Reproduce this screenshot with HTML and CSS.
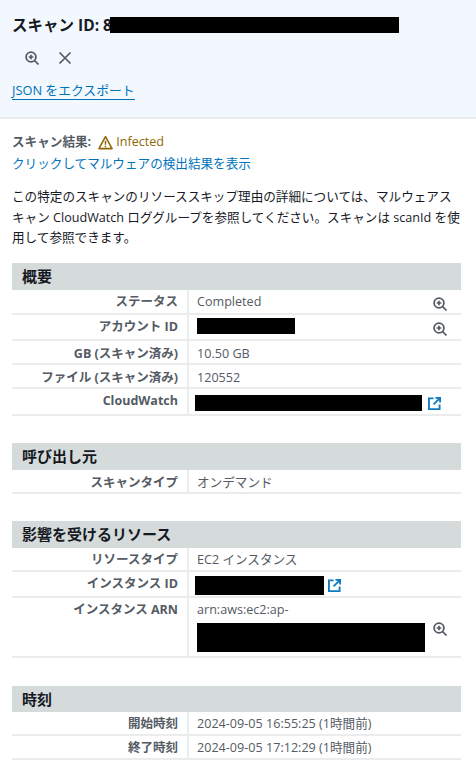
FILE: index.html
```html
<!DOCTYPE html>
<html lang="ja">
<head>
<meta charset="utf-8">
<title>スキャン ID</title>
<link rel="stylesheet" href="styles.css">
</head>
<body>
<svg class="defs" width="0" height="0">
    <symbol id="zoom" viewBox="0 0 14 14">
        <circle cx="6" cy="6" r="4.900" fill="none" stroke="currentColor" stroke-width="1.800"/>
        <path d="M9.500 9.500l4 4M6 3.700v4.600M3.700 6h4.600" fill="none" stroke="currentColor" stroke-width="1.700"/>
    </symbol>
    <symbol id="external" viewBox="0 0 14 14">
        <path d="M6 1.500H1v11.500h11.500V8" fill="none" stroke="currentColor" stroke-width="2"/>
        <path d="M8 1h5v5M12.500 1.500L6 8" fill="none" stroke="currentColor" stroke-width="2"/>
    </symbol>
</svg>

<div class="panel-header">
    <h2 class="panel-title">スキャン ID: 8<span class="redact redact-title"></span></h2>
    <div class="panel-actions">
        <svg class="icon icon-grey"><use href="#zoom"/></svg>
        <svg class="icon icon-grey" viewBox="0 0 14 14"><path d="M1.500 1.500l11 11M12.500 1.500l-11 11" fill="none" stroke="currentColor" stroke-width="1.700"/></svg>
    </div>
    <a class="link export-link" href="#">JSON をエクスポート</a>
</div>

<div class="content">
    <div class="result-line">
        <strong>スキャン結果:</strong>
        <svg class="icon-warn" viewBox="0 0 16 16"><path d="M8 1.800L15 14.500H1z" fill="none" stroke="#906806" stroke-width="1.700" stroke-linejoin="round"/><path d="M8 6v4.500M8 11.500v1.600" stroke="#906806" stroke-width="1.600"/></svg>
        <span class="status-warn">Infected</span>
    </div>
    <a class="link-plain" href="#">クリックしてマルウェアの検出結果を表示</a>
    <p class="note">この特定のスキャンのリソーススキップ理由の詳細については、マルウェアスキャン CloudWatch ロググループを参照してください。スキャンは scanId を使用して参照できます。</p>

    <section class="section">
        <h3 class="section-title">概要</h3>
        <div class="row h25"><div class="label">ステータス</div><div class="value">Completed<svg class="icon-end"><use href="#zoom"/></svg></div></div>
        <div class="row h26"><div class="label">アカウント ID</div><div class="value"><span class="redact redact-account"></span><svg class="icon-end"><use href="#zoom"/></svg></div></div>
        <div class="row h24 row-low"><div class="label">GB (スキャン済み)</div><div class="value">10.50 GB</div></div>
        <div class="row h24 row-low"><div class="label">ファイル (スキャン済み)</div><div class="value">120552</div></div>
        <div class="row h27"><div class="label">CloudWatch</div><div class="value value-log"><span class="redact redact-log"></span><svg class="icon-ext"><use href="#external"/></svg></div></div>
    </section>

    <section class="section">
        <h3 class="section-title">呼び出し元</h3>
        <div class="row h24 row-low"><div class="label">スキャンタイプ</div><div class="value">オンデマンド</div></div>
    </section>

    <section class="section">
        <h3 class="section-title">影響を受けるリソース</h3>
        <div class="row h24"><div class="label">リソースタイプ</div><div class="value">EC2 インスタンス</div></div>
        <div class="row h26"><div class="label">インスタンス ID</div><div class="value value-instance"><span class="redact redact-instance"></span><svg class="icon-ext"><use href="#external"/></svg></div></div>
        <div class="row h60">
            <div class="label">インスタンス ARN</div>
            <div class="value value-arn">
                <div class="arn-text">arn:aws:ec2:ap-<span class="redact redact-arn"></span></div>
                <svg class="icon-end"><use href="#zoom"/></svg>
            </div>
        </div>
    </section>

    <section class="section section-time">
        <h3 class="section-title">時刻</h3>
        <div class="row h24"><div class="label">開始時刻</div><div class="value">2024-09-05 16:55:25 (1時間前)</div></div>
        <div class="row h24"><div class="label">終了時刻</div><div class="value">2024-09-05 17:12:29 (1時間前)</div></div>
    </section>
</div>
</body>
</html>
```

FILE: styles.css
```css
/* page */
html, body {
    height: 760px;
    overflow: hidden;
}

body {
    margin: 0;
    background: #fff;
    color: #16191f;
    font-family: "Open Sans", "Noto Sans CJK JP", sans-serif;
    font-size: 12.600px;
    line-height: 18px;
}

.defs {
    position: absolute;
}

/* header */
.panel-header {
    height: 119px;
    padding: 15px 12px 0;
    box-sizing: border-box;
    background: #f2f8fd;
    border-bottom: 2px solid #eaeded;
}

.panel-title {
    margin: 0;
    height: 20px;
    font-size: 15.500px;
    line-height: 20px;
    font-weight: 700;
    white-space: nowrap;
}

.panel-actions {
    display: flex;
    gap: 19px;
    margin: 13px 0 0 13px;
    height: 20px;
    align-items: center;
}

.icon {
    width: 14px;
    height: 14px;
}

.icon-grey {
    color: #545b64;
}

.link {
    display: inline-block;
    margin-top: 13px;
    color: #0073bb;
    font-size: 12.800px;
    line-height: 18px;
    text-decoration: none;
    border-bottom: 1px solid #0073bb;
}

/* redacted parts */
.redact {
    display: inline-block;
    background: #000;
}

.redact-title {
    width: 289px;
    height: 16px;
    margin-left: -2px;
    vertical-align: -2px;
}

.redact-account {
    width: 98px;
    height: 16px;
}

.redact-log {
    width: 227px;
    height: 16px;
    margin-left: -2px;
}

.redact-instance {
    width: 129px;
    height: 19px;
    margin-left: -2px;
}

.redact-arn {
    display: block;
    width: 228px;
    height: 29px;
    margin-top: 4px;
}

/* content */
.content {
    padding: 14px 15px 0 12px;
}

.result-line {
    display: flex;
    align-items: center;
    height: 18px;
    color: #545b64;
}

.result-line strong {
    font-weight: 700;
}

.icon-warn {
    width: 15px;
    height: 15px;
    margin: 0 3px 0 7px;
}

.status-warn {
    color: #906806;
}

.link-plain {
    display: block;
    margin-top: 4px;
    color: #0073bb;
    text-decoration: none;
}

.note {
    margin: 14px 0 0;
    line-height: 20.500px;
}

/* sections */
.section {
    margin-bottom: 27px;
}

.section:first-of-type {
    margin-top: 14px;
}

.section-title {
    margin: 0;
    height: 27px;
    padding-left: 10px;
    background: #d5dbdb;
    font-size: 15px;
    line-height: 27px;
    font-weight: 700;
}

.section-time {
    margin-top: 28px;
}

.section-time .section-title {
    height: 26px;
    line-height: 26px;
}

.row {
    display: grid;
    grid-template-columns: 175px 1fr;
    box-sizing: border-box;
    border-bottom: 2px solid #eaeded;
}

.h24 { height: 24px; }
.h25 { height: 25px; }
.h26 { height: 26px; }
.h27 { height: 27px; }
.h60 { height: 60px; }

.label {
    padding: 3px 9px 0 0;
    text-align: right;
    color: #545b64;
    font-size: 12.500px;
    font-weight: 700;
    white-space: nowrap;
}

.value {
    display: flex;
    align-items: flex-start;
    padding: 3px 14px 0 8px;
    border-left: 2px solid #eaeded;
    color: #545b64;
}

.row-low .label, .row-low .value {
    padding-top: 4px;
}

.value-log {
    padding-top: 6px;
}

.h26 .value-instance {
    padding-top: 4px;
}

.arn-text {
    width: 228px;
}

.icon-end {
    width: 14px;
    height: 14px;
    margin: 4px 0 0 auto;
    color: #545b64;
}

.value-arn .icon-end {
    margin-top: 21px;
}

.icon-ext {
    width: 13px;
    height: 13px;
    margin: 2px 0 0 6px;
    color: #0f7cc0;
}

.value-instance .icon-ext {
    margin: 3px 0 0 4px;
}
```
